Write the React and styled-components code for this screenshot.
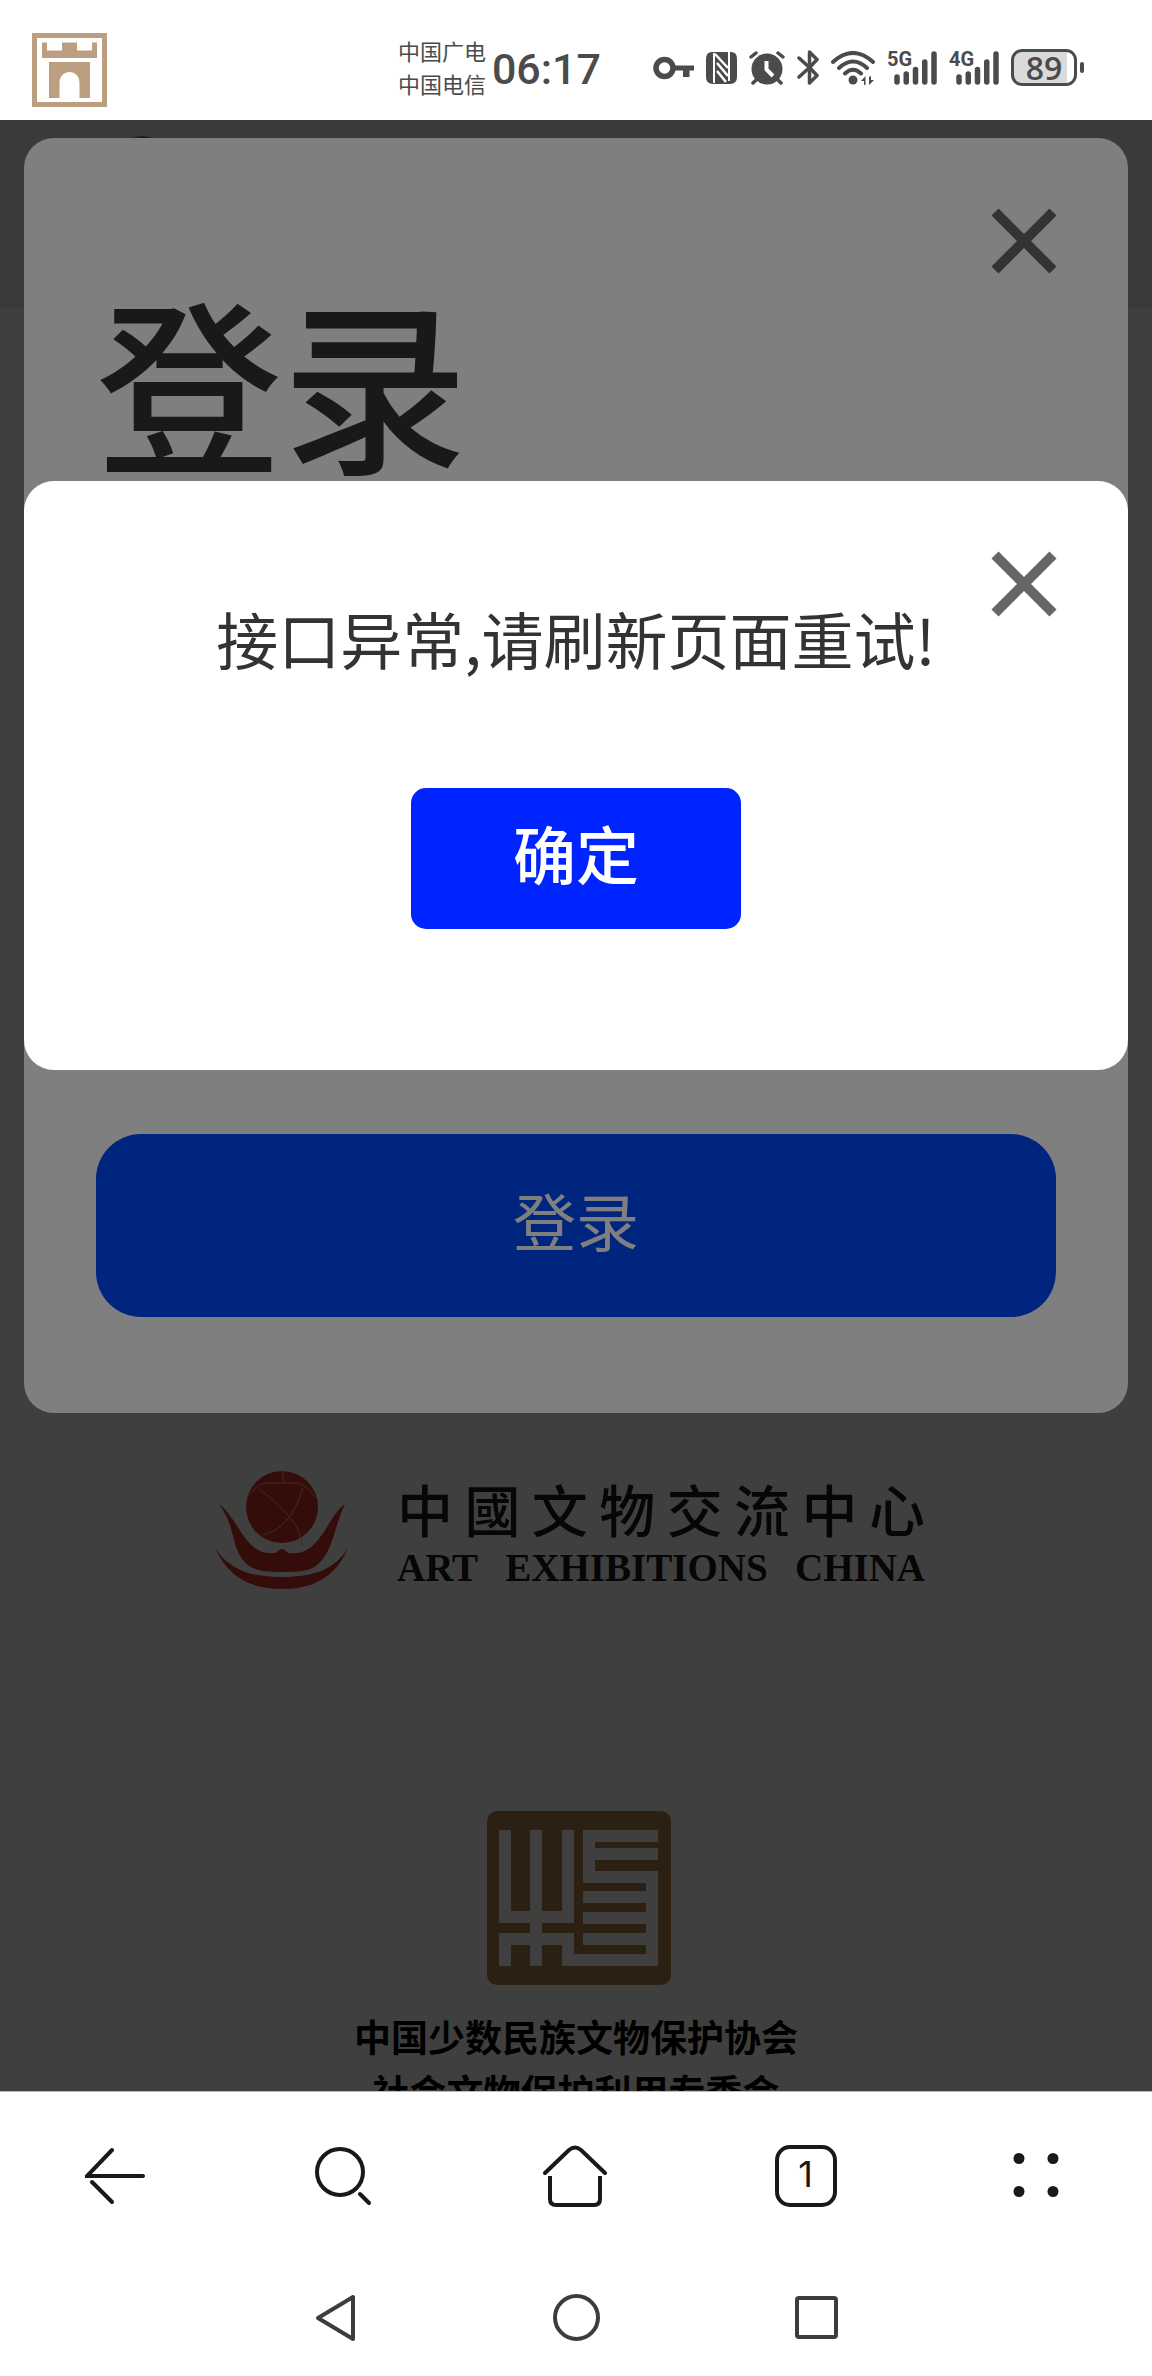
import React, { useState } from 'react';
import styled, { createGlobalStyle } from 'styled-components';

const GlobalStyle = createGlobalStyle`
    * {
        box-sizing: border-box;
    }

    body {
        margin: 0;
        background: #fff;
        font-family: "Noto Sans CJK SC", "Noto Sans", sans-serif;
    }

    button {
        padding: 0;
        border: 0;
        background: none;
        font-family: inherit;
        cursor: pointer;
    }

    svg {
        display: block;
    }
`;

const Screen = styled.div`
    min-height: 100vh;
    display: flex;
    flex-direction: column;
`;

// Status bar

const StatusBar = styled.header`
    height: 120px;
    padding: 20px 75px 0 32px;
    display: flex;
    align-items: center;
    color: #4b4b4b;
`;

const Carriers = styled.div`
    margin-left: auto;
    padding-bottom: 6px;
    font-size: 22px;
    line-height: 33px;
`;

const Clock = styled.time`
    margin: 0 52px 0 6px;
    padding-bottom: 2px;
    font-family: Roboto, sans-serif;
    font-size: 43px;
    line-height: 48px;
    font-weight: 500;
`;

const StatusIcons = styled.div`
    padding-bottom: 5px;
    display: flex;
    align-items: center;
    gap: 12px;
`;

const Network = styled.div`
    position: relative;
`;

const NetworkType = styled.span`
    position: absolute;
    top: -2px;
    left: 0;
    font-family: Roboto, sans-serif;
    font-size: 20px;
    line-height: 20px;
    font-weight: 700;
`;

const Battery = styled.div`
    position: relative;
    width: 66px;
    height: 37px;
    border: 3px solid #4b4b4b;
    border-radius: 11px;
    background: linear-gradient(to right, #dadada 89%, #fff 89%);
    font-family: "Open Sans", sans-serif;
    font-size: 32px;
    line-height: 31px;
    font-weight: 600;
    text-align: center;

    &::after {
        content: '';
        position: absolute;
        top: 10px;
        right: -10px;
        width: 4px;
        height: 11px;
        border-radius: 2px;
        background: #4b4b4b;
    }
`;

// Page under the dialogs

const Viewport = styled.main`
    position: relative;
    flex: 1 0 0;
    min-height: 1400px;
    overflow: hidden;
    background: #fff;
`;

const Banner = styled.div`
    height: 188px;
    padding: 16px 0 0 118px;
    background: #e5ece8;
`;

const Avatar = styled.div`
    width: 48px;
    height: 48px;
    border-radius: 50%;
    background: #8c6c7c;
`;

const Partners = styled.div`
    padding-top: 1162px;
    display: flex;
    flex-direction: column;
    align-items: center;
`;

const Exchange = styled.div`
    margin-right: 12px;
    display: flex;
    align-items: center;
    gap: 48px;
`;

const ExchangeName = styled.div`
    width: 528px;
    color: #1c1414;
`;

const Calligraphy = styled.div`
    padding-bottom: 8px;
    display: flex;
    justify-content: space-between;
    font-family: "Noto Sans CJK TC", sans-serif;
    font-size: 56px;
    line-height: 68px;
    font-weight: 500;
`;

const English = styled.div`
    display: flex;
    justify-content: space-between;
    font-family: "Liberation Serif", serif;
    font-size: 39px;
    line-height: 36px;
    font-weight: 700;
`;

const Association = styled.div`
    margin-top: 221px;
    display: flex;
    flex-direction: column;
    align-items: center;
    color: #000;
    font-size: 37px;
    line-height: 55px;
    font-weight: 700;
    white-space: nowrap;
`;

const Seal = styled.svg`
    margin: 0 0 24px 6px;
`;

// Dialogs

const Overlay = styled.div`
    position: absolute;
    inset: 0;
    padding: ${props => props.$top} 24px 0;
    background: rgba(0, 0, 0, 0.5);
`;

const Card = styled.section`
    position: relative;
    min-height: ${props => props.$height};
    padding: ${props => props.$padding};
    display: flex;
    flex-direction: column;
    border-radius: 30px;
    background: #fff;
`;

const CloseButton = styled.button`
    position: absolute;
    top: 70px;
    right: 71px;
    color: #666;
`;

const Title = styled.h1`
    margin: 0;
    color: #333;
    font-size: 186px;
    line-height: 240px;
    font-weight: 500;
`;

const LoginButton = styled.button`
    height: 183px;
    margin-top: auto;
    padding-bottom: 14px;
    border-radius: 45px;
    background: #004aff;
    color: #fff;
    font-size: 63px;
    line-height: 90px;
`;

const Message = styled.p`
    margin: 0 0 105px;
    color: #333;
    font-size: 62px;
    line-height: 90px;
    text-align: center;
`;

const ConfirmButton = styled.button`
    align-self: center;
    width: 330px;
    height: 141px;
    padding-bottom: 14px;
    border-radius: 15px;
    background: #0024ff;
    color: #fff;
    font-size: 63px;
    line-height: 90px;
    font-weight: 500;
`;

// Bottom bars

const Browser = styled.nav`
    height: 167px;
    padding: 1px 1px 0 0;
    border-top: 1px solid #bbb;
    display: grid;
    grid-template-columns: repeat(5, 1fr);
    align-items: center;
    justify-items: center;
    color: #191919;
`;

const System = styled.nav`
    height: 118px;
    padding: 1px 216px 0;
    display: grid;
    grid-template-columns: repeat(3, 1fr);
    align-items: center;
    justify-items: center;
    color: #3c3c3c;
`;

const Tabs = styled.button`
    width: 62px;
    height: 62px;
    padding-bottom: 3px;
    border: 4px solid #191919;
    border-radius: 15px;
    color: #191919;
    font-family: Inter, sans-serif;
    font-size: 36px;
    line-height: 50px;
`;

const NavButton = styled.button`
    color: inherit;
`;

const GateLogo = () => (
    <svg width="75" height="74" viewBox="0 0 75 74" fill="#bb9f80">
        <path fillRule="evenodd" d="M0 0H75V74H0ZM5 5V69H70V5Z" />
        <path d="M10 9.500H15V17.500H30V9.500H45V17.500H60V9.500H65V25H10Z" />
        <path d="M17 29H58V65H47.500V50C47.500 43 43 39 37.500 39S27.500 43 27.500 50V65H17Z" />
    </svg>
);

const KeyIcon = () => (
    <svg width="41" height="24" viewBox="0 0 41 24">
        <circle cx="11.500" cy="12" r="8.500" fill="none" stroke="currentColor" strokeWidth="5.500" />
        <path d="M20 9.500H41V14.500H36.500V21H30V14.500H20Z" fill="currentColor" />
    </svg>
);

const NfcIcon = () => (
    <svg width="31" height="32" viewBox="0 0 31 32">
        <path d="M6 0H25Q31 0 31 7V25Q31 32 24 32H7Q0 32 0 25V7Q0 0 6 0Z" fill="currentColor" />
        <path d="M8 1V31M23 0V29" stroke="#fff" strokeWidth="2" fill="none" />
        <path d="M9 2L22 16M11 11L22 24M11 19L20 30" stroke="#fff" strokeWidth="2.500" fill="none" />
    </svg>
);

const AlarmIcon = () => (
    <svg width="36" height="34" viewBox="0 0 36 34">
        <circle cx="18" cy="18" r="15.500" fill="currentColor" />
        <path d="M2 6L7 2M34 6L29 2M8 28L4 32M28 28L32 32" stroke="currentColor" strokeWidth="3.500" strokeLinecap="round" />
        <path d="M17.500 10V18.500L24 25" fill="none" stroke="#fff" strokeWidth="4" />
    </svg>
);

const BluetoothIcon = () => (
    <svg width="22" height="35" viewBox="0 0 22 35" fill="none" stroke="currentColor" strokeWidth="3.500" strokeLinecap="round" strokeLinejoin="round">
        <path d="M2 8L12.500 17.500L20 25.500L12.500 33V22M2 27L12.500 17.500L20 9.500L12.500 2V13" />
    </svg>
);

const WifiIcon = () => (
    <svg width="44" height="34" viewBox="0 0 44 34" fill="none" stroke="currentColor" strokeWidth="4" strokeLinecap="round">
        <path d="M2 11Q22 -7 42 11M8 17Q22 4 36 17M14 22.500Q22 15 30 22.500" />
        <circle cx="22" cy="29" r="4.500" fill="currentColor" stroke="none" />
        <path d="M30 30L34.500 25V34H33V30ZM38 26V34L43 29H40V25Z" fill="currentColor" stroke="none" />
    </svg>
);

const SignalIcon = () => (
    <svg width="50" height="34" viewBox="0 0 50 34" stroke="currentColor" strokeWidth="5.500" strokeLinecap="round">
        <path d="M10 26V31M19.250 23V31M28.500 18.500V31M37.750 11V31M47 3V31" />
    </svg>
);

const CloseIcon = () => (
    <svg width="66" height="66" viewBox="0 0 66 66" stroke="currentColor" strokeWidth="10">
        <path d="M4 4L62 62M62 4L4 62" />
    </svg>
);

const ExchangeLogo = () => (
    <svg width="134" height="120" viewBox="0 0 134 120" fill="#d0302a">
        <circle cx="67" cy="37" r="36" />
        <path d="M33 26Q43 13 52 13H83Q94 17 100 27M68 1V12M44 19Q86 50 87 75M88 18Q75 60 47 65" fill="none" stroke="#f0b8b4" strokeWidth="1" />
        <path d="M4 34C20 44 30 82 53 83Q61 84 63 81Q67 77 71 81Q73 84 81 83C106 82 114 44 130 34C121 53 118 74 111 84C101 101 90 102 67 102C44 102 33 100 24 84C17 70 18 53 4 34Z" />
        <path d="M0 78C14 99 34 107 67 107C100 107 120 99 133 78C121 106 100 119 67 119C34 119 13 106 0 78Z" />
    </svg>
);

const SealLogo = () => (
    <Seal width="184" height="174" viewBox="0 0 184 174">
        <rect width="184" height="174" rx="10" fill="#b08048" />
        <g fill="none" stroke="#fff" strokeWidth="12">
            <path d="M18 19V106H81V19M49 19V155M18 155V128H81V149H165V66H102V25H171M108 43H171M96 86H159M96 107H159M96 128H159" />
        </g>
    </Seal>
);

export default function App() {
    const [alertOpen, setAlertOpen] = useState(true);
    const [loginOpen, setLoginOpen] = useState(true);

    return (
        <Screen>
            <GlobalStyle />
            <StatusBar>
                <GateLogo />
                <Carriers>
                    <div>中国广电</div>
                    <div>中国电信</div>
                </Carriers>
                <Clock>06:17</Clock>
                <StatusIcons>
                    <KeyIcon />
                    <NfcIcon />
                    <AlarmIcon />
                    <BluetoothIcon />
                    <WifiIcon />
                    <Network>
                        <NetworkType>5G</NetworkType>
                        <SignalIcon />
                    </Network>
                    <Network>
                        <NetworkType>4G</NetworkType>
                        <SignalIcon />
                    </Network>
                    <Battery>89</Battery>
                </StatusIcons>
            </StatusBar>

            <Viewport>
                <Banner>
                    <Avatar />
                </Banner>
                <Partners>
                    <Exchange>
                        <ExchangeLogo />
                        <ExchangeName>
                            <Calligraphy>
                                {[...'中國文物交流中心'].map((char, i) => <span key={i}>{char}</span>)}
                            </Calligraphy>
                            <English>
                                <span>ART</span>
                                <span>EXHIBITIONS</span>
                                <span>CHINA</span>
                            </English>
                        </ExchangeName>
                    </Exchange>
                    <Association>
                        <SealLogo />
                        <div>中国少数民族文物保护协会</div>
                        <div>社会文物保护利用专委会</div>
                    </Association>
                </Partners>

                {loginOpen && (
                    <Overlay $top="18px">
                        <Card $height="1275px" $padding="121px 72px 96px">
                            <CloseButton aria-label="关闭" onClick={() => setLoginOpen(false)}><CloseIcon /></CloseButton>
                            <Title>登录</Title>
                            <LoginButton onClick={() => setAlertOpen(true)}>登录</LoginButton>
                        </Card>
                    </Overlay>
                )}

                {alertOpen && (
                    <Overlay $top="361px">
                        <Card $height="589px" $padding="112px 72px">
                            <CloseButton aria-label="关闭" onClick={() => setAlertOpen(false)}><CloseIcon /></CloseButton>
                            <Message>接口异常,请刷新页面重试!</Message>
                            <ConfirmButton onClick={() => setAlertOpen(false)}>确定</ConfirmButton>
                        </Card>
                    </Overlay>
                )}
            </Viewport>

            <Browser>
                <NavButton aria-label="返回">
                    <svg width="60" height="62" viewBox="0 0 60 62" fill="none" stroke="currentColor" strokeWidth="4" strokeLinecap="round">
                        <path d="M27 5L2 31H58" />
                        <path d="M7 37L27 57" />
                    </svg>
                </NavButton>
                <NavButton aria-label="搜索">
                    <svg width="60" height="60" viewBox="0 0 60 60" fill="none" stroke="currentColor" strokeWidth="4">
                        <circle cx="25" cy="26" r="23" />
                        <path d="M45 48L54 57" strokeLinecap="round" />
                    </svg>
                </NavButton>
                <NavButton aria-label="主页">
                    <svg width="64" height="62" viewBox="0 0 64 62" fill="none" stroke="currentColor" strokeWidth="4" strokeLinecap="round">
                        <path d="M2 28L26 5Q32 0 38 5L62 28" />
                        <path d="M7 31V54Q7 60 13 60H51Q57 60 57 54V31" strokeLinecap="butt" />
                    </svg>
                </NavButton>
                <Tabs aria-label="标签页">1</Tabs>
                <NavButton aria-label="菜单">
                    <svg width="46" height="46" viewBox="0 0 46 46" fill="currentColor">
                        <circle cx="6" cy="5.500" r="5.500" />
                        <circle cx="40" cy="5.500" r="5.500" />
                        <circle cx="6" cy="38.500" r="5.500" />
                        <circle cx="40" cy="38.500" r="5.500" />
                    </svg>
                </NavButton>
            </Browser>
            <System>
                <NavButton aria-label="后退">
                    <svg width="42" height="48" viewBox="0 0 42 48" fill="none" stroke="currentColor" strokeWidth="4" strokeLinejoin="round">
                        <path d="M3 24L38 3V45Z" />
                    </svg>
                </NavButton>
                <NavButton aria-label="主屏幕">
                    <svg width="47" height="47" viewBox="0 0 47 47" fill="none" stroke="currentColor" strokeWidth="4">
                        <circle cx="23.500" cy="23.500" r="21.500" />
                    </svg>
                </NavButton>
                <NavButton aria-label="最近任务">
                    <svg width="43" height="43" viewBox="0 0 43 43" fill="none" stroke="currentColor" strokeWidth="4">
                        <rect x="2" y="2" width="39" height="39" rx="2" />
                    </svg>
                </NavButton>
            </System>
        </Screen>
    );
}
